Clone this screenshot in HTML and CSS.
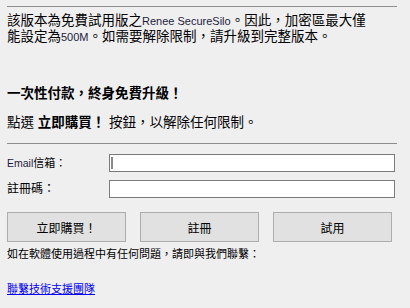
FILE: index.html
```html
<!DOCTYPE html>
<html lang="zh-Hant">

<head>
    <meta charset="UTF-8">
    <meta name="viewport" content="width=device-width, initial-scale=1.0">
    <title>Renee SecureSilo - 註冊</title>
    <link rel="stylesheet" href="styles.css">
</head>

<body>
    <div class="panel">
        <hr class="rule">
        <p class="notice">該版本為免費試用版之<span class="latin">Renee SecureSilo</span>。因此，加密區最大僅<br>能設定為<span class="latin">500M</span>。如需要解除限制，請升級到完整版本。</p>

        <h2 class="promo">一次性付款，終身免費升級！</h2>
        <p class="hint">點選 <b>立即購買！</b> 按鈕，以解除任何限制。</p>
        <hr class="rule">

        <div class="form">
            <label class="form-label email-label" for="email"><span class="latin">Email</span>信箱：</label>
            <input type="text" class="form-input focused" id="email">
            <label class="form-label" for="code">註冊碼：</label>
            <input type="text" class="form-input" id="code">
        </div>

        <div class="actions">
            <button class="action-button">立即購買！</button>
            <button class="action-button">註冊</button>
            <button class="action-button">試用</button>
        </div>

        <p class="contact">如在軟體使用過程中有任何問題，請即與我們聯繫：</p>
        <a class="support-link" href="#">聯繫技術支援團隊</a>
    </div>
</body>

</html>
```

FILE: styles.css
```css
* {
    box-sizing: border-box;
    font-family: "Liberation Sans", "Noto Sans CJK TC", sans-serif;
}

body {
    margin: 0;
    background-color: #f0eff0;
    color: #000;
}

.panel {
    padding: 6px 14px 0 7px;
    display: flex;
    flex-direction: column;
}

.rule {
    margin: 0;
    border: none;
    border-top: 1px solid #8e8e8e;
    width: 390px;
}

.latin {
    font-size: 11px;
    color: #1c1c3c;
}

.notice {
    margin: 6px 0 0;
    font-size: 13.5px;
    line-height: 16px;
}

.promo {
    margin: 41px 0 0;
    font-size: 13.5px;
    line-height: 16px;
    font-weight: bold;
}

.hint {
    margin: 13px 0 12px;
    font-size: 13.5px;
    line-height: 16px;
}

.hint b {
    font-weight: bold;
}

.form {
    margin-top: 10px;
    display: grid;
    grid-template-columns: 102px 286px;
    row-gap: 8px;
    align-items: center;
}

.form-label {
    font-size: 12px;
    line-height: 18px;
}

.email-label {
    font-size: 11px;
}

.email-label .latin {
    font-size: 10.5px;
}

.form-input {
    height: 18px;
    margin: 0;
    padding: 0 2px;
    border: 1px solid #7a7a7a;
    background-color: white;
    outline: none;
    font-size: 12px;
}

/* fake caret, the email box has focus in the dialog */
.form-input.focused {
    background: linear-gradient(#8a8a8a, #8a8a8a) no-repeat 1px 2px / 2px 12px, white;
}

.actions {
    margin-top: 14px;
    display: flex;
    gap: 14px;
}

.action-button {
    width: 119px;
    height: 30px;
    padding: 0;
    background-color: #e1e1e1;
    border: 1px solid #adadad;
    font-size: 12px;
    color: #000;
}

.contact {
    margin: 5px 0 0;
    font-size: 11px;
    line-height: 14px;
}

.support-link {
    margin-top: 21px;
    font-size: 11px;
    line-height: 14px;
    color: #0000ee;
    align-self: flex-start;
}
```
